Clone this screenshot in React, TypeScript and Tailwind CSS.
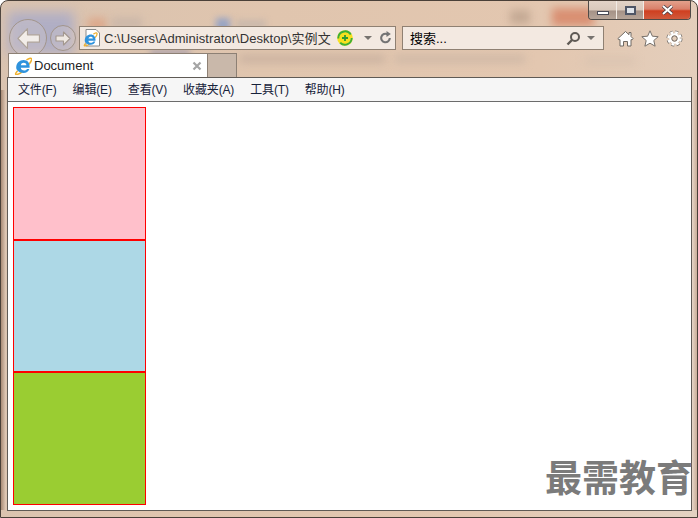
import React from "react";

const cjk = { fontFamily: '"Liberation Sans","Noto Sans CJK SC",sans-serif' };

function IeE({ size }: { size: number }) {
  return (
    <svg width={size} height={size} viewBox="0 0 18 18" className="shrink-0">
      <path d="M3.2 14.2C1.2 16.6 1 17.6 3 17.4c1.4-.1 3.6-1.2 6-3M13 2.6c2.6-1.6 4.4-2 4.6-.6.2 1.2-.8 3-2.4 5" fill="none" stroke="#eeb02e" strokeWidth="1.5" strokeLinecap="round" />
      <path d="M2.2 10.2C2.4 6 5.600 3 9.600 3c3.800 0 6 2.800 6 6.200v1.600H6.800c.2 3 4.600 3.900 6.200 1.100h2.400c-1 2.800-3.200 4-5.800 4-4 0-7.600-2.400-7.400-5.700zM6.900 8.200h5.500c-.2-3-5-3.200-5.500 0z" fill="#2f93dd" />
    </svg>
  );
}

function BackButton() {
  return (
    <div className="flex h-[38px] w-[38px] shrink-0 items-center justify-center rounded-full border border-[#a2958b] bg-[#e9dcd2]/20">
      <svg width="25" height="23" viewBox="0 0 24 22">
        <path d="M11 1.500 1.800 11l9.200 9.500v-6h11.500v-7H11z" fill="#f2ede9" stroke="#aea39a" strokeWidth="1.100" strokeLinejoin="round" />
      </svg>
    </div>
  );
}

function ForwardButton() {
  return (
    <div className="flex h-[26px] w-[26px] shrink-0 items-center justify-center rounded-full border border-[#a2958b] bg-[#e9dcd2]/20">
      <svg width="16" height="15" viewBox="0 0 16 15">
        <path d="M8.500 1 15 7.500 8.500 14v-4H1V5h7.500z" fill="#efe8e2" stroke="#a3978e" strokeWidth="1.100" strokeLinejoin="round" />
      </svg>
    </div>
  );
}

function Menu({ label }: { label: string }) {
  return <span className="text-[12px] leading-none tracking-[-0.15px] text-[#17223a]" style={cjk}>{label}</span>;
}

export default function App() {
  return (
    <div className="relative h-[518px] w-[698px] overflow-hidden bg-white" style={cjk}>
      {/* blurred desktop showing through the glass */}
      <div className="absolute inset-0 rounded-t-[8px] border border-[#4a4038] bg-[linear-gradient(100deg,#d9c3b0_0%,#e0c5ae_35%,#e3c7b0_70%,#e4d2c2_100%)]" />
      <div className="absolute left-[8px] top-[12px] h-[42px] w-[66px] bg-[#b0aec4] blur-[6px]" />
      <div className="absolute left-[88px] top-[18px] h-[14px] w-[18px] bg-[#dca78a] blur-[4px]" />
      <div className="absolute left-[112px] top-[18px] h-[10px] w-[30px] bg-[#c9b6a8] blur-[4px]" />
      <div className="absolute left-[216px] top-[18px] h-[14px] w-[14px] bg-[#98a4c4] blur-[3px]" />
      <div className="absolute left-[236px] top-[20px] h-[8px] w-[30px] bg-[#c9b8ac] blur-[3px]" />
      <div className="absolute left-[150px] top-[50px] h-[6px] w-[40px] bg-[#a9a0ac] blur-[3px]" />
      <div className="absolute left-[552px] top-[8px] h-[18px] w-[42px] bg-[#d98f72] blur-[4px]" />
      <div className="absolute left-[510px] top-[10px] h-[14px] w-[20px] bg-[#c4a994] blur-[4px]" />
      <div className="absolute left-[240px] top-[56px] h-[6px] w-[145px] bg-[#c4ad9c] blur-[4px]" />
      <div className="absolute left-[395px] top-[56px] h-[6px] w-[130px] bg-[#cab5a4] blur-[4px]" />
      <div className="absolute left-[585px] top-[58px] h-[6px] w-[50px] bg-[#d8c2b0] blur-[4px]" />
      <div className="absolute left-[1px] top-[90px] h-[420px] w-[5px] bg-[linear-gradient(90deg,#a88b76,#e2cbb8)]" />
      <div className="absolute right-[1px] top-[90px] h-[420px] w-[5px] bg-[linear-gradient(90deg,#e8d6c8,#c9ad98)]" />

      {/* window buttons */}
      <div className="absolute left-[588px] top-[1px] flex h-[19px] w-[103px] overflow-hidden rounded-b-[4px] border border-t-0 border-[#4f4a47]">
        <div className="flex w-[28px] items-center justify-center border-r border-[#f2ebe5] bg-[linear-gradient(180deg,#e2d3c7_0%,#d9c9bc_50%,#a59287_55%,#b5a498_100%)]">
          <div className="mt-[5px] h-[4px] w-[12px] border border-[#4a4a55] bg-white" />
        </div>
        <div className="flex w-[27px] items-center justify-center border-r border-[#f2ebe5] bg-[linear-gradient(180deg,#e2d3c7_0%,#d9c9bc_50%,#a59287_55%,#b5a498_100%)]">
          <div className="h-[9px] w-[11px] border-2 border-[#4f5666] bg-[#dfe4ea]" />
        </div>
        <div className="flex flex-1 items-center justify-center bg-[linear-gradient(180deg,#e3a18c_0%,#d9806a_45%,#cf3f20_55%,#d05a3c_100%)]">
          <svg width="13" height="10" viewBox="0 0 13 10">
            <path d="M2 1 11 9M11 1 2 9" stroke="#4a3f45" strokeWidth="3.600" />
            <path d="M2 1 11 9M11 1 2 9" stroke="#fff" strokeWidth="2" />
          </svg>
        </div>
      </div>

      <div className="relative flex h-full flex-col pb-[7px] pl-[7px] pr-[6px]">
        {/* navigation row */}
        <div className="flex h-[53px] items-end pl-[2px]">
          <div className="mb-[-4px] flex items-center gap-[3px]">
            <BackButton />
            <ForwardButton />
          </div>
          <div className="mb-[3px] ml-[3px] flex h-[24px] w-[317px] items-center border border-[#8f8072] bg-[#f3ebe4]/95 pl-[3px]">
            <svg width="18" height="18" viewBox="0 0 18 18" className="shrink-0">
              <path d="M3 .5h10l3.500 3.500v13H3z" fill="#fff" stroke="#8a8a8a" />
              <g transform="translate(0 3) scale(.8)">
                <path d="M3.200 14.200C1.200 16.600 1 17.600 3 17.400c1.400-.1 3.600-1.200 6-3M13 2.600c2.600-1.600 4.400-2 4.600-.6.200 1.200-.8 3-2.400 5" fill="none" stroke="#eeb02e" strokeWidth="1.600" />
                <path d="M2.200 10.200C2.400 6 5.600 3 9.600 3c3.800 0 6 2.800 6 6.200v1.600H6.800c.2 3 4.600 3.900 6.200 1.100h2.400c-1 2.800-3.200 4-5.800 4-4 0-7.600-2.400-7.400-5.700zM6.900 8.200h5.500c-.2-3-5-3.200-5.500 0z" fill="#2f93dd" />
              </g>
            </svg>
            <span className="ml-[3px] w-[227px] overflow-hidden whitespace-nowrap text-[13px] leading-none tracking-[0.06px] text-[#333]">C:\Users\Administrator\Desktop\实例文</span>
            <svg width="16" height="16" viewBox="0 0 16 16" className="ml-[6px] shrink-0">
              <circle cx="8" cy="8" r="7.800" fill="#f7e01f" />
              <path d="M1.300 8.500A6.800 6.800 0 0 1 13.800 4.500" fill="none" stroke="#3cae3a" strokeWidth="1.900" />
              <path d="M14.700 8a6.800 6.800 0 0 1-11.500 4.800" fill="none" stroke="#3cae3a" strokeWidth="1.900" />
              <path d="M8 5v6M5 8h6" stroke="#2e9b32" strokeWidth="1.800" />
            </svg>
            <div className="ml-[11px] h-0 w-0 border-x-[4px] border-t-[4px] border-x-transparent border-t-[#77736f]" />
            <svg width="12" height="14" viewBox="0 0 12 14" className="ml-[8px] shrink-0">
              <path d="M9.800 7a4.300 4.300 0 1 1-2.300-3.800" fill="none" stroke="#747474" strokeWidth="2.100" />
              <path d="M6.500 0v6l4.300-3z" fill="#747474" />
            </svg>
          </div>
          <div className="mb-[3px] ml-[6px] flex h-[24px] w-[202px] items-center border border-[#8f8072] bg-[#f3ebe4]/95 pl-[7px] pr-[8px]">
            <span className="flex-1 text-[13px] leading-none text-black">搜索...</span>
            <svg width="15" height="15" viewBox="0 0 15 15">
              <circle cx="9" cy="6" r="4" fill="none" stroke="#5f5a55" strokeWidth="2" />
              <path d="M6 9 1.500 13.500" stroke="#5f5a55" strokeWidth="2.400" />
            </svg>
            <div className="ml-[6px] h-0 w-0 border-x-[4px] border-t-[4px] border-x-transparent border-t-[#77736f]" />
          </div>
          <div className="mb-[3px] ml-[13px] flex h-[24px] items-center gap-[7px]">
            <svg width="17" height="17" viewBox="0 0 17 17">
              <path d="M8.500 1.500 12 4.700V2.500h2v4l2.200 2.200-1.100 1H14V16h-3.500v-4.500h-4V16H3V9.700H1.900l-1.100-1z" fill="#fff" stroke="#6f6963" strokeLinejoin="round" />
            </svg>
            <svg width="18" height="17" viewBox="0 0 18 17">
              <path d="m9 .8 2.400 5.400 5.800.5-4.400 3.800 1.300 5.700L9 13.200l-5.100 3 1.300-5.700L.8 6.700l5.800-.5z" fill="#fff" stroke="#77716b" strokeLinejoin="round" />
            </svg>
            <svg width="17" height="17" viewBox="0 0 17 17">
              <circle cx="8.500" cy="8.500" r="6" fill="none" stroke="#6f6963" strokeWidth="4" strokeDasharray="2.700 2" />
              <circle cx="8.500" cy="8.500" r="6" fill="none" stroke="#fff" strokeWidth="2.600" strokeDasharray="2.700 2" />
              <circle cx="8.500" cy="8.500" r="4.200" fill="none" stroke="#fff" strokeWidth="2.200" />
              <circle cx="8.500" cy="8.500" r="2.700" fill="#e3cdb9" stroke="#6f6963" />
            </svg>
          </div>
        </div>

        {/* tab row */}
        <div className="flex h-[24px] items-stretch pl-[1px]">
          <div className="flex w-[200px] items-center border border-b-0 border-[#8d8074] bg-white pl-[5px] pr-[5px]">
            <IeE size={18} />
            <span className="ml-[2px] flex-1 text-[13px] leading-none text-[#222]">Document</span>
            <svg width="10" height="10" viewBox="0 0 10 10">
              <path d="m1.500 1.500 7 7M8.500 1.500l-7 7" stroke="#a5a5a5" strokeWidth="2.200" />
            </svg>
          </div>
          <div className="w-[29px] border border-b-0 border-l-0 border-[#8d8074] bg-[#c9b8aa]" />
        </div>

        {/* page frame */}
        <div className="flex flex-1 flex-col border border-[#5f5a55] bg-white">
          <div className="flex h-[24px] items-center gap-[16px] border-b border-[#6c6c6c] bg-[#f6f6f6] pl-[10px]">
            <Menu label="文件(F)" />
            <Menu label="编辑(E)" />
            <Menu label="查看(V)" />
            <Menu label="收藏夹(A)" />
            <Menu label="工具(T)" />
            <Menu label="帮助(H)" />
          </div>
          <div className="relative flex-1 pl-[5px] pt-[5px]">
            <div className="h-[133px] w-[133px] border border-[#ff0000] bg-[#ffc0cb]" />
            <div className="h-[132px] w-[133px] border border-[#ff0000] bg-[#add8e6]" />
            <div className="h-[133px] w-[133px] border border-[#ff0000] bg-[#9acd32]" />
            <span className="absolute bottom-[12px] right-[-2px] whitespace-nowrap text-[37px] font-bold leading-none text-[#7b7b7b]">最需教育</span>
          </div>
        </div>
      </div>
    </div>
  );
}
